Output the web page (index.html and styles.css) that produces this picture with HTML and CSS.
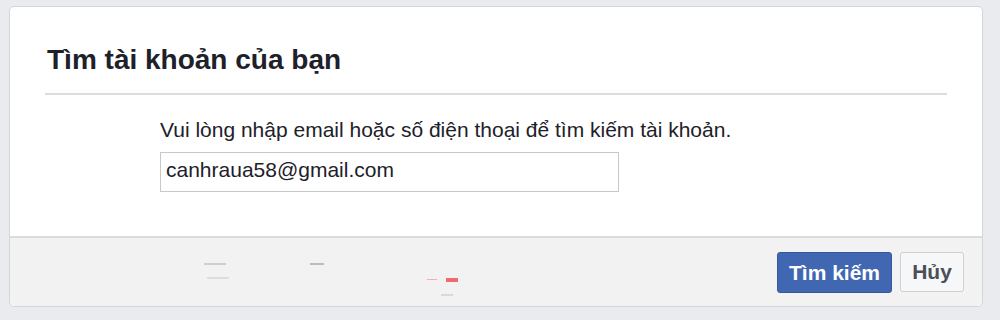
FILE: index.html
```html
<!DOCTYPE html>
<html lang="vi">
<head>
<meta charset="utf-8">
<title>Tìm tài khoản của bạn</title>
<link rel="stylesheet" href="styles.css">
</head>
<body>
<div class="card">
  <div class="header">
    <h2 class="title">Tìm tài khoản của bạn</h2>
  </div>
  <div class="content">
    <div class="desc">Vui lòng nhập email hoặc số điện thoại để tìm kiếm tài khoản.</div>
    <input class="field" type="text" value="canhraua58@gmail.com">
  </div>
  <div class="footer">
    <button class="btn btn-primary" type="button">Tìm kiếm</button>
    <button class="btn btn-cancel" type="button">Hủy</button>
  </div>
  <span class="smudge s1"></span>
  <span class="smudge s2"></span>
  <span class="smudge s3"></span>
  <span class="smudge s4"></span>
  <span class="smudge red r1"></span>
  <span class="smudge red r2"></span>
  <span class="smudge s5"></span>
</div>
</body>
</html>
```
FILE: styles.css
```css
html, body {
  margin: 0;
  padding: 0;
}
body {
  background: #e9ebee;
  font-family: "Liberation Sans", Arial, sans-serif;
  color: #1d2129;
  padding: 6px 0 0 9px;
}
.card {
  position: relative;
  width: 972px;
  background: #fff;
  border: 1px solid #d3d6da;
  border-radius: 5px;
  box-sizing: content-box;
}
.header {
  margin: 0 35px 0 35px;
  padding: 37px 0 17px 2px;
  border-bottom: 2px solid #dadde1;
}
.title {
  margin: 0;
  font-size: 28px;
  line-height: 32px;
  font-weight: bold;
  color: #1d2129;
}
.content {
  padding: 22px 0 44px 150px;
}
.desc {
  font-size: 21px;
  line-height: 26px;
  color: #1d2129;
  margin-bottom: 9px;
}
.field {
  display: block;
  box-sizing: border-box;
  width: 459px;
  height: 40px;
  margin: 0;
  padding: 3px 5px 7px;
  border: 1px solid #c5c8cd;
  border-radius: 0;
  font-family: "Liberation Sans", Arial, sans-serif;
  font-size: 21px;
  color: #1d2129;
  background: #fff;
  outline: none;
}
.footer {
  display: flex;
  justify-content: flex-end;
  align-items: flex-start;
  gap: 8px;
  padding: 14px 18px 13px 0;
  background: #f2f2f2;
  border-top: 2px solid #d9dbde;
  border-radius: 0 0 5px 5px;
}
.btn {
  box-sizing: border-box;
  margin: 0;
  font-family: "Liberation Sans", Arial, sans-serif;
  font-size: 21px;
  font-weight: bold;
  line-height: 24px;
  border-radius: 3px;
  cursor: pointer;
}
.btn-primary {
  height: 41px;
  width: 115px;
  padding: 0;
  background: #4267b2;
  border: 1px solid #365899;
  color: #fff;
}
.btn-cancel {
  height: 40px;
  width: 64px;
  padding: 0;
  background: #f6f7f9;
  border: 1px solid #ced0d4;
  color: #4b4f56;
}
.smudge {
  position: absolute;
  height: 2px;
  background: #b8b8b8;
  opacity: 0.6;
}
.s1 { left: 194px; top: 256px; width: 22px; }
.s2 { left: 197px; top: 270px; width: 22px; background: #cfcfcf; }
.s3 { left: 300px; top: 256px; width: 14px; background: #9a9a9a; }
.s4 { left: 431px; top: 287px; width: 12px; background: #c8c8c8; }
.red { background: #f0505a; opacity: 0.85; }
.r1 { left: 417px; top: 272px; width: 10px; height: 1px; opacity: 0.4; }
.r2 { left: 436px; top: 271px; width: 12px; height: 4px; }
.s5 { left: 214px; top: 304px; width: 18px; background: #cccccc; }
```
